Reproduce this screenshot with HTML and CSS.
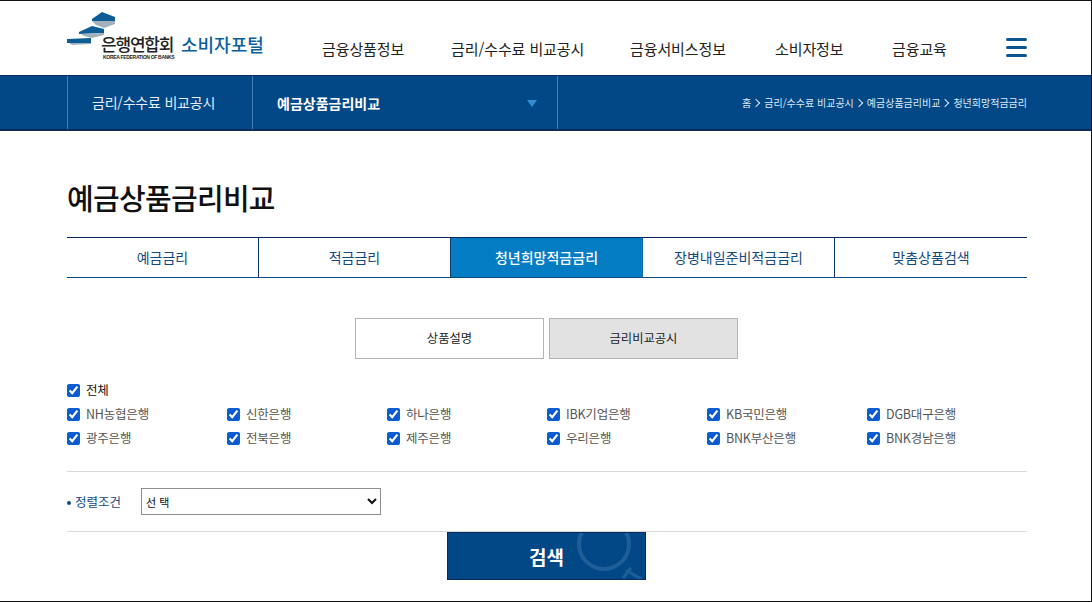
FILE: index.html
```html
<!DOCTYPE html>
<html lang="ko">
<head>
<meta charset="utf-8">
<title>예금상품금리비교</title>
<link rel="stylesheet" href="styles.css">
</head>
<body>
<div class="frame">
  <header class="top">
    <div class="wrap top-in">
      <a class="logo">
        <svg class="logo-mark" width="52" height="35" viewBox="66 11 52 35">
          <path d="M92 19 L102 12 L115 17 L115 21 L92 21 Z" fill="#0d5c96"/>
          <path d="M92 21 L115 21 L115 24 L104 28 L96 25 Z" fill="#a3b1bc"/>
          <path d="M79 32 L92 26 L104 29 L104 33 L79 34 Z" fill="#0d5c96"/>
          <path d="M81 34 L104 33 L104 35 L92 38 L84 36 Z" fill="#a3b1bc"/>
          <path d="M67 39 L91 38 L91 43 L67 43 Z" fill="#0d5c96"/>
          <path d="M69 43 L91 43 L91 44 L72 45 Z" fill="#a3b1bc"/>
        </svg>
        <span class="logo-name">
          <span class="logo-ko">은행연합회</span>
          <span class="logo-en">KOREA FEDERATION OF BANKS</span>
        </span>
        <span class="logo-portal">소비자포털</span>
      </a>
      <nav class="nav">
        <a class="nav-a">금융상품정보</a>
        <a class="nav-b">금리/수수료 비교공시</a>
        <a class="nav-c">금융서비스정보</a>
        <a class="nav-d">소비자정보</a>
        <a class="nav-e">금융교육</a>
      </nav>
      <div class="burger"><i></i><i></i><i></i></div>
    </div>
  </header>
  <div class="bar">
    <div class="wrap bar-in">
      <div class="bar-first">금리/수수료 비교공시</div>
      <div class="bar-second"><span>예금상품금리비교</span><i class="caret"></i></div>
      <div class="crumbs">
        <span>홈</span><b></b><span>금리/수수료 비교공시</span><b></b><span>예금상품금리비교</span><b></b><span>청년희망적금금리</span>
      </div>
    </div>
  </div>
  <main class="wrap">
    <h1 class="title">예금상품금리비교</h1>
    <div class="tabs">
      <a>예금금리</a>
      <a>적금금리</a>
      <a class="on">청년희망적금금리</a>
      <a>장병내일준비적금금리</a>
      <a>맞춤상품검색</a>
    </div>
    <div class="subtabs">
      <a>상품설명</a>
      <a class="on">금리비교공시</a>
    </div>
    <label class="chk all"><input type="checkbox" checked>전체</label>
    <div class="banks">
      <label class="chk"><input type="checkbox" checked>NH농협은행</label>
      <label class="chk"><input type="checkbox" checked>신한은행</label>
      <label class="chk"><input type="checkbox" checked>하나은행</label>
      <label class="chk"><input type="checkbox" checked>IBK기업은행</label>
      <label class="chk"><input type="checkbox" checked>KB국민은행</label>
      <label class="chk"><input type="checkbox" checked>DGB대구은행</label>
      <label class="chk"><input type="checkbox" checked>광주은행</label>
      <label class="chk"><input type="checkbox" checked>전북은행</label>
      <label class="chk"><input type="checkbox" checked>제주은행</label>
      <label class="chk"><input type="checkbox" checked>우리은행</label>
      <label class="chk"><input type="checkbox" checked>BNK부산은행</label>
      <label class="chk"><input type="checkbox" checked>BNK경남은행</label>
    </div>
    <div class="sort">
      <span class="sort-label">정렬조건</span>
      <select class="sort-select"><option>선 택</option></select>
    </div>
    <div class="actions">
      <button class="search" type="button">
        <span>검색</span>
        <svg class="search-ico" width="90" height="46" viewBox="0 0 90 46">
          <circle cx="49" cy="11" r="25" fill="none" stroke="#1f5f98" stroke-width="4"/>
          <path d="M71 37 L86 46 M68 45 L76 35" stroke="#1f5f98" stroke-width="3" fill="none"/>
        </svg>
      </button>
    </div>
  </main>
</div>
</body>
</html>
```

FILE: styles.css
```css
* { box-sizing: border-box; }
html, body { margin: 0; padding: 0; height: 100%; overflow: hidden; background: #fff; }
body { font-family: "Noto Sans CJK KR", "Liberation Sans", sans-serif; color: #222; }
.frame { width: 1092px; height: 602px; border-top: 1px solid #111; border-right: 1px solid #111; border-bottom: 1px solid #111; overflow: hidden; }
.wrap { width: 960px; margin-left: 67px; }

.top { height: 74px; }
.top-in { display: flex; align-items: flex-start; height: 74px; position: relative; }
.logo { display: flex; width: 250px; position: relative; height: 74px; }
.logo-mark { position: absolute; left: -1px; top: 10px; }
.logo-name { position: absolute; left: 34px; top: 32px; display: flex; flex-direction: column; width: 75px; }
.logo-ko { font-size: 17px; line-height: 21px; font-weight: 500; letter-spacing: -1.2px; color: #222; white-space: nowrap; }
.logo-en { font-family: "Liberation Sans", sans-serif; font-size: 5px; line-height: 6px; font-weight: 700; letter-spacing: -0.3px; margin-left: 2px; color: #222; white-space: nowrap; }
.logo-portal { position: absolute; left: 114px; top: 30px; font-size: 18px; line-height: 26px; font-weight: 500; color: #0b5f9e; white-space: nowrap; }
.nav { display: flex; margin-left: 5px; padding-top: 37px; font-size: 15px; line-height: 22px; color: #222; white-space: nowrap; letter-spacing: -0.1px; }
.nav-a { width: 129px; }
.nav-b { width: 179px; }
.nav-c { width: 145px; }
.nav-d { width: 117px; }
.nav-e { width: 100px; }
.burger { position: absolute; right: 0; top: 37px; width: 21px; display: flex; flex-direction: column; gap: 5px; }
.burger i { display: block; height: 3px; border-radius: 2px; background: #0d5690; }

.bar { height: 56px; background: #024887; border-top: 1px solid #0a2a5c; border-bottom: 2px solid #0a2a5c; color: #fff; }
.bar-in { display: flex; align-items: stretch; height: 53px; }
.bar-first { width: 186px; border-left: 1px solid #4a7fb5; border-right: 1px solid #4a7fb5; padding-left: 24px; font-size: 14px; line-height: 52px; letter-spacing: -0.2px; color: #e6eef7; white-space: nowrap; }
.bar-second { width: 305px; border-right: 1px solid #4a7fb5; padding: 0 20px 0 24px; display: flex; align-items: center; justify-content: space-between; font-size: 14px; font-weight: 700; color: #fff; white-space: nowrap; }
.caret { width: 0; height: 0; border-left: 5px solid transparent; border-right: 5px solid transparent; border-top: 7px solid #2f8fd6; margin-top: 1px; }
.crumbs { flex: 1; display: flex; align-items: center; justify-content: flex-end; font-size: 10px; color: #dce8f4; white-space: nowrap; }
.crumbs b { width: 6px; height: 6px; border-top: 1px solid #dce8f4; border-right: 1px solid #dce8f4; transform: rotate(45deg); margin: 0 5px 0 2px; }

.title { margin: 0; padding-top: 45px; height: 106px; font-size: 29px; line-height: 42px; font-weight: 500; letter-spacing: -0.7px; color: #111; }
.tabs { display: grid; grid-template-columns: repeat(5, 192px); height: 41px; border-top: 1px solid #0a2a5c; border-bottom: 1px solid #0a4a82; }
.tabs a { font-size: 14px; line-height: 39px; text-align: center; color: #14497e; border-right: 1px solid #0a3a70; white-space: nowrap; }
.tabs a:last-child { border-right: 0; }
.tabs a.on { background: #047cc4; color: #fff; font-weight: 500; border-right-color: #0a6aa8; }

.subtabs { display: flex; gap: 5px; padding-left: 288px; margin-top: 40px; }
.subtabs a { width: 189px; height: 41px; border: 1px solid #b4b4b4; font-size: 12.3px; line-height: 39px; text-align: center; color: #222; }
.subtabs a.on { background: #e2e2e2; }

.chk { display: flex; align-items: center; font-size: 12.5px; letter-spacing: -0.2px; line-height: 24px; height: 24px; color: #555; white-space: nowrap; }
.chk input { width: 13px; height: 13px; margin: 0 6px 0 0; accent-color: #0a5ccf; }
.all { margin-top: 19px; color: #111; }
.banks { display: grid; grid-template-columns: repeat(6, 160px); grid-auto-rows: 24px; }

.sort { display: flex; align-items: center; border-top: 1px solid #d8d8d8; border-bottom: 1px solid #d8d8d8; height: 61px; margin-top: 21px; }
.sort-label { width: 74px; font-size: 12.5px; color: #14497e; position: relative; padding-left: 8px; white-space: nowrap; }
.sort-label::before { content: ""; position: absolute; left: 0; top: 50%; width: 4px; height: 4px; margin-top: -1px; border-radius: 50%; background: #14497e; }
.sort-select { width: 240px; height: 27px; border: 1px solid #8e8e8e; background: #fff; font-family: inherit; font-size: 11px; color: #111; padding-left: 0; }

.actions { display: flex; padding-left: 380px; }
.search { position: relative; width: 199px; height: 48px; margin: 0; padding: 0; border: 1px solid #0a2a5c; background: #024887; color: #fff; font-family: inherit; font-size: 19px; font-weight: 700; overflow: hidden; }
.search span { position: relative; z-index: 1; }
.search-ico { position: absolute; right: 0; top: 0; }
```
